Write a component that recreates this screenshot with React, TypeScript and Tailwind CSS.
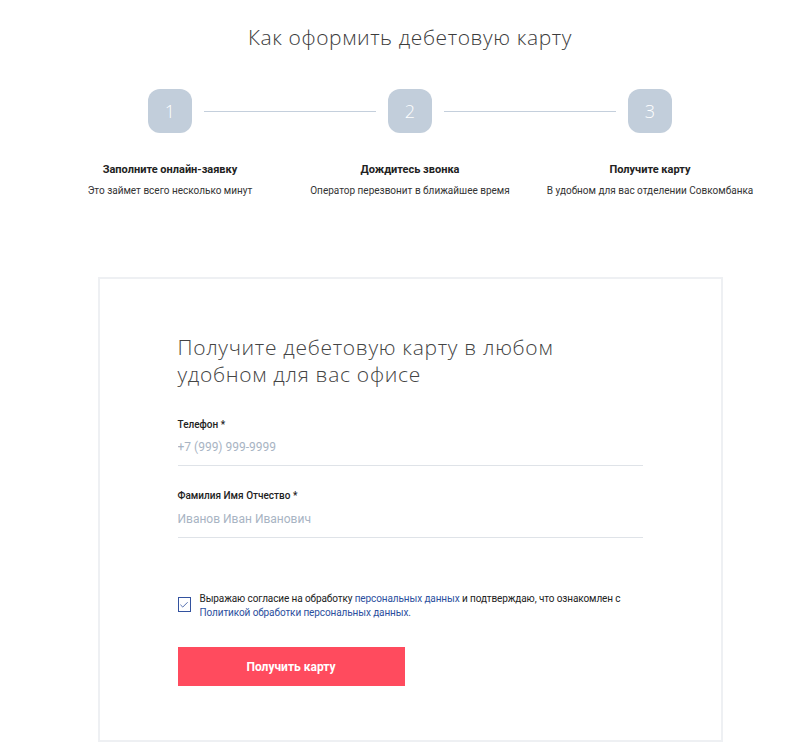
import { Check } from "lucide-react";

const steps = [
  { n: "1", title: "Заполните онлайн-заявку", text: "Это займет всего несколько минут" },
  { n: "2", title: "Дождитесь звонка", text: "Оператор перезвонит в ближайшее время" },
  { n: "3", title: "Получите карту", text: "В удобном для вас отделении Совкомбанка" },
];

export default function App() {
  return (
    <div className="min-h-screen bg-white pl-[20px] font-['Roboto',sans-serif] text-[#222]">
      {/* Steps */}
      <section className="pt-[24px]">
        <h1 className="text-center font-['Open_Sans',sans-serif] text-[21px] font-light leading-[26px] tracking-[0.6px] text-[#3c3c3c]">
          Как оформить дебетовую карту
        </h1>

        <div className="mx-auto mt-[39px] grid w-[720px] grid-cols-3">
          {steps.map((s, i) => (
            <div key={s.n} className="flex flex-col items-center">
              <div className="flex w-full items-center">
                <div className="flex-1 pr-[12px]">
                  {i > 0 && <div className="h-px bg-[#c4cfdc]" />}
                </div>
                <div className="flex h-[44px] w-[44px] items-center justify-center rounded-[12px] bg-[#c2cedb] font-['Open_Sans',sans-serif] text-[18px] font-light text-white">
                  {s.n}
                </div>
                <div className="flex-1 pl-[12px]">
                  {i < 2 && <div className="h-px bg-[#c4cfdc]" />}
                </div>
              </div>
              <div className="mt-[30px] text-[11px] font-bold leading-[14px] text-[#222]">{s.title}</div>
              <div className="mt-[7px] text-[10px] leading-[13px] text-[#333]">{s.text}</div>
            </div>
          ))}
        </div>
      </section>

      {/* Form card */}
      <section className="mx-auto mt-[80px] w-[625px] border-2 border-[#eef0f3] pl-[78px] pr-[78px] pt-[55px] pb-[54px]">
        <h2 className="font-['Open_Sans',sans-serif] text-[21px] font-light leading-[27px] tracking-[0.7px] text-[#444]">
          Получите дебетовую карту в любом
          <br />
          удобном для вас офисе
        </h2>

        <label className="mt-[30px] block">
          <span className="block text-[10px] font-medium leading-[13px] text-[#222]">Телефон *</span>
          <input
            className="mt-[8px] block w-full border-b border-[#dfe3e8] pb-[10px] text-[12px] leading-[16px] outline-none placeholder:text-[#a8b4c3]"
            placeholder="+7 (999) 999-9999"
          />
        </label>

        <label className="mt-[23px] block">
          <span className="block text-[10px] font-medium leading-[13px] text-[#222]">Фамилия Имя Отчество *</span>
          <input
            className="mt-[9px] block w-full border-b border-[#dfe3e8] pb-[10px] text-[12px] leading-[16px] outline-none placeholder:text-[#a8b4c3]"
            placeholder="Иванов Иван Иванович"
          />
        </label>

        <div className="mt-[54px] flex items-start gap-[9px]">
          <div className="mt-[5px] flex h-[15px] w-[13px] shrink-0 items-center justify-center border-[1.5px] border-[#33529f]">
            <Check className="h-[10px] w-[10px] text-[#33529f]" strokeWidth={2} />
          </div>
          <p className="text-[10px] leading-[14px] tracking-[-0.1px] text-[#222]">
            Выражаю согласие на обработку <a className="text-[#2c4f9e]">персональных данных</a> и подтверждаю, что ознакомлен с
            <br />
            <a className="text-[#2c4f9e]">Политикой обработки персональных данных.</a>
          </p>
        </div>

        <button className="mt-[27px] flex h-[39px] w-[227px] items-center justify-center bg-[#ff4b5e] text-[12px] font-bold text-white">
          Получить карту
        </button>
      </section>
    </div>
  );
}
